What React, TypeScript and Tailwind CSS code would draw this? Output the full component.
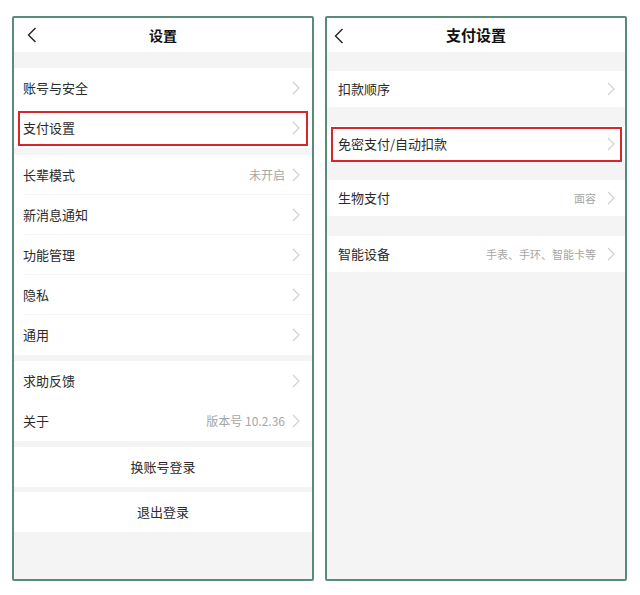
import React from "react";

const FONT = { fontFamily: '"Noto Sans CJK SC", "Noto Sans", sans-serif' };

function Chevron({ className = "" }: { className?: string }) {
  return (
    <svg width="8" height="14" viewBox="0 0 8 14" className={className}>
      <path d="M1 1 L7 7 L1 13" fill="none" stroke="#cfcfcf" strokeWidth="1.1" />
    </svg>
  );
}

function Back() {
  return (
    <svg width="10" height="16" viewBox="0 0 10 16">
      <path d="M8.5 1 L1.5 8 L8.5 15" fill="none" stroke="#222" strokeWidth="1.4" />
    </svg>
  );
}

function LRow({
  label,
  value,
  sep,
  boxed,
}: {
  label: string;
  value?: string;
  sep?: boolean;
  boxed?: boolean;
}) {
  return (
    <div className="relative h-[40px] bg-white flex items-center pl-[9px] pr-[12px]">
      <span className="text-[13px] text-[#2b2b2b] flex-1">{label}</span>
      {value && <span className="text-[12px] text-[#a6a6a6] mr-[7px]">{value}</span>}
      <Chevron />
      {sep && <div className="absolute bottom-0 left-[9px] right-0 h-px bg-[#f4f4f4]" />}
      {boxed && (
        <div className="absolute left-[4px] right-[4px] top-[3px] bottom-[2px] border-2 border-[#d8262d]" />
      )}
    </div>
  );
}

function RRow({ label, value, boxed }: { label: string; value?: string; boxed?: boolean }) {
  return (
    <div className="relative h-[36px] bg-white flex items-center pl-[11px] pr-[10px]">
      <span className="text-[13px] text-[#2b2b2b] flex-1">{label}</span>
      {value && <span className="text-[11px] text-[#a6a6a6] mr-[11px]">{value}</span>}
      <Chevron />
      {boxed && (
        <div className="absolute left-[4px] right-[3px] top-[1px] bottom-0 border-2 border-[#d8262d]" />
      )}
    </div>
  );
}

export default function App() {
  return (
    <div className="w-[640px] h-[595px] bg-white flex gap-[11px] pl-[12px] pt-[16px]" style={FONT}>
      {/* Left panel */}
      <div className="w-[302px] h-[565px] border-2 border-[#5a8b79] rounded-[2px] bg-[#f4f4f4] flex flex-col overflow-hidden">
        <div className="h-[34px] bg-white relative flex items-center justify-center shrink-0">
          <div className="absolute left-[13px] top-[9px]">
            <Back />
          </div>
          <span className="text-[14px] font-bold text-[#111]">设置</span>
        </div>
        <div className="h-[16px] shrink-0" />
        <LRow label="账号与安全" />
        <LRow label="支付设置" boxed />
        <div className="h-[7px] shrink-0" />
        <LRow label="长辈模式" value="未开启" sep />
        <LRow label="新消息通知" sep />
        <LRow label="功能管理" sep />
        <LRow label="隐私" sep />
        <LRow label="通用" />
        <div className="h-[6px] shrink-0" />
        <LRow label="求助反馈" />
        <LRow label="关于" value="版本号 10.2.36" />
        <div className="h-[6px] shrink-0" />
        <div className="h-[40px] bg-white flex items-center justify-center text-[13px] text-[#2b2b2b]">
          换账号登录
        </div>
        <div className="h-[5px] shrink-0" />
        <div className="h-[40px] bg-white flex items-center justify-center text-[13px] text-[#2b2b2b]">
          退出登录
        </div>
      </div>

      {/* Right panel */}
      <div className="w-[302px] h-[565px] border-2 border-[#5a8b79] rounded-[2px] bg-[#f4f4f4] flex flex-col overflow-hidden">
        <div className="h-[34px] bg-white relative flex items-center justify-center shrink-0">
          <div className="absolute left-[7px] top-[10px]">
            <Back />
          </div>
          <span className="text-[15px] font-bold text-[#111]">支付设置</span>
        </div>
        <div className="h-[19px] shrink-0" />
        <RRow label="扣款顺序" />
        <div className="h-[19px] shrink-0" />
        <RRow label="免密支付/自动扣款" boxed />
        <div className="h-[18px] shrink-0" />
        <RRow label="生物支付" value="面容" />
        <div className="h-[20px] shrink-0" />
        <RRow label="智能设备" value="手表、手环、智能卡等" />
      </div>
    </div>
  );
}
